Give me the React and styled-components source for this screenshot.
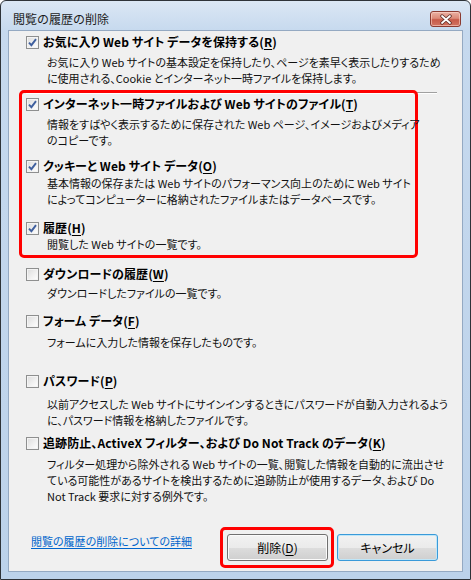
import styled, { createGlobalStyle } from "styled-components";

const GlobalStyle = createGlobalStyle`
  html, body {
    margin: 0;
    padding: 0;
    background: #ffffff;
  }
  body {
    font-family: "Noto Sans CJK JP", "Noto Sans", sans-serif;
    font-feature-settings: "palt";
    font-size: 12px;
    color: #000;
  }
`;

const Window = styled.div`
  box-sizing: border-box;
  width: 471px;
  height: 580px;
  display: flex;
  flex-direction: column;
  border: 1px solid #2e3338;
  border-radius: 6px 6px 0 0;
  padding: 0 7px 7px;
  background: linear-gradient(#dbe7f4 0px, #c6d9ee 30px, #bcd2ea 100%);
`;

const TitleBar = styled.div`
  height: 29px;
  display: flex;
  align-items: flex-start;
  justify-content: space-between;
`;

const Title = styled.div`
  margin: 10px 0 0 5px;
  line-height: 16px;
  font-size: 12px;
  color: #1b1b1b;
  font-feature-settings: normal;
`;

const CloseButton = styled.div`
  box-sizing: border-box;
  width: 31px;
  height: 16px;
  margin: 10px 2px 0 0;
  border: 1px solid #8b3b31;
  border-radius: 3px;
  background: linear-gradient(#eab1a3 0%, #dc8a78 45%, #c75a48 55%, #d27462 100%);
  box-shadow: inset 0 0 0 1px rgba(255, 220, 210, 0.55);
  display: flex;
  align-items: center;
  justify-content: center;
`;

const Client = styled.div`
  flex: 1;
  display: flex;
  flex-direction: column;
  background: #f0f0f0;
  border: 1px solid #94a9c2;
`;

const List = styled.div`
  display: flex;
  flex-direction: column;
  padding-left: 17px;
`;

const Highlight = styled.div`
  position: relative;
  box-sizing: border-box;
  border: 3px solid #ff0000;
  border-radius: 5px;
`;

const GroupMark = styled(Highlight)`
  width: 399px;
  margin: -3px 0 0 -7px;
  padding: 0 0 3px 4px;
`;

const Separator = styled.div`
  width: 411px;
  height: 1px;
  margin-top: 6px;
  background: #a0a0a0;
  box-shadow: 0 1px 0 #ffffff;
`;

const Option = styled.div`
  display: flex;
  flex-direction: column;
  margin-top: ${(p) => p.$top}px;
`;

const LabelRow = styled.label`
  display: flex;
  align-items: center;
  height: 16px;
  gap: 4px;
`;

const LabelText = styled.span`
  font-weight: 700;
  line-height: 16px;
  white-space: nowrap;
  letter-spacing: 0.1px;
`;

const Desc = styled.div`
  margin: ${(p) => p.$gap}px 0 0 21px;
  font-size: 11px;
  line-height: 16px;
  white-space: nowrap;
  color: #111;
`;

const Key = styled.span`
  text-decoration: underline;
  text-underline-offset: 2px;
`;

const Box = styled.span`
  box-sizing: border-box;
  width: 13px;
  height: 13px;
  flex: none;
  border: 1px solid #8e8f8f;
  background: linear-gradient(135deg, #dcdcdc 0%, #f2f2f2 60%, #ffffff 100%);
  box-shadow: inset 0 0 0 1px #f4f4f4;
  display: flex;
  align-items: center;
  justify-content: center;
`;

const Footer = styled.div`
  display: flex;
  align-items: flex-start;
  margin-top: 23px;
  padding: 0 24px 0 22px;
`;

const HelpLink = styled.a`
  margin-top: 6px;
  font-size: 11px;
  line-height: 16px;
  color: #0066cc;
  text-decoration: underline;
  text-underline-offset: 2px;
  cursor: pointer;
`;

const ButtonMark = styled(Highlight)`
  margin-left: auto;
  padding: 4px 3px 4px 4px;
`;

const Button = styled.button`
  box-sizing: border-box;
  width: 101px;
  height: 27px;
  margin-top: ${(p) => (p.$default ? 7 : 0)}px;
  margin-left: ${(p) => (p.$default ? 3 : 0)}px;
  border: 1px solid ${(p) => (p.$default ? "#3a9ad9" : "#707070")};
  border-radius: 3px;
  background: linear-gradient(#f2f2f2 0%, #ebebeb 50%, #dddddd 51%, #cfcfcf 100%);
  box-shadow: inset 0 0 0 1px ${(p) => (p.$default ? "#bfe6f8" : "#fbfbfb")};
  font-family: inherit;
  font-feature-settings: "palt";
  font-size: 12px;
  color: #000;
  padding: 0;
`;

function CheckBox({ checked }) {
  return (
    <Box>
      {checked && (
        <svg width="9" height="9" viewBox="0 0 9 9">
          <path d="M1 4.6 L3.4 7.2 L8 1.2" fill="none" stroke="#3f5f9e" strokeWidth="1.9" />
        </svg>
      )}
    </Box>
  );
}

function Item({ label, keyChar, lines, checked, top, gap }) {
  return (
    <Option $top={top}>
      <LabelRow>
        <CheckBox checked={checked} />
        <LabelText>
          {label}(<Key>{keyChar}</Key>)
        </LabelText>
      </LabelRow>
      <Desc $gap={gap}>
        {lines.map((line, i) => (
          <div key={i}>{line}</div>
        ))}
      </Desc>
    </Option>
  );
}

const keep = {
  label: "お気に入り Web サイト データを保持する",
  keyChar: "R",
  checked: true,
  top: 3,
  gap: 4,
  lines: [
    "お気に入り Web サイトの基本設定を保持したり、ページを素早く表示したりするため",
    "に使用される、Cookie とインターネット一時ファイルを保持します。",
  ],
};

const marked = [
  {
    label: "インターネット一時ファイルおよび Web サイトのファイル",
    keyChar: "T",
    checked: true,
    top: 3,
    gap: 4,
    lines: [
      "情報をすばやく表示するために保存された Web ページ、イメージおよびメディア",
      "のコピーです。",
    ],
  },
  {
    label: "クッキーと Web サイト データ",
    keyChar: "O",
    checked: true,
    top: 10,
    gap: 1,
    lines: [
      "基本情報の保存または Web サイトのパフォーマンス向上のために Web サイト",
      "によってコンピューターに格納されたファイルまたはデータベースです。",
    ],
  },
  {
    label: "履歴",
    keyChar: "H",
    checked: true,
    top: 13,
    gap: 0,
    lines: ["閲覧した Web サイトの一覧です。"],
  },
];

const rest = [
  {
    label: "ダウンロードの履歴",
    keyChar: "W",
    top: 8,
    gap: 3,
    lines: ["ダウンロードしたファイルの一覧です。"],
  },
  {
    label: "フォーム データ",
    keyChar: "F",
    top: 12,
    gap: 5,
    lines: ["フォームに入力した情報を保存したものです。"],
  },
  {
    label: "パスワード",
    keyChar: "P",
    top: 23,
    gap: 7,
    lines: [
      "以前アクセスした Web サイトにサインインするときにパスワードが自動入力されるよう",
      "に、パスワード情報を格納したファイルです。",
    ],
  },
  {
    label: "追跡防止、ActiveX フィルター、および Do Not Track のデータ",
    keyChar: "K",
    top: 7,
    gap: 5,
    lines: [
      "フィルター処理から除外される Web サイトの一覧、閲覧した情報を自動的に流出させ",
      "ている可能性があるサイトを検出するために追跡防止が使用するデータ、および Do",
      "Not Track 要求に対する例外です。",
    ],
  },
];

export default function App() {
  return (
    <>
      <GlobalStyle />
      <Window>
        <TitleBar>
          <Title>閲覧の履歴の削除</Title>
          <CloseButton>
            <svg width="14" height="11" viewBox="0 0 14 11">
              <path d="M3 2 L11 9 M11 2 L3 9" stroke="#5a2a24" strokeWidth="3.4" strokeLinecap="round" />
              <path d="M3 2 L11 9 M11 2 L3 9" stroke="#ffffff" strokeWidth="1.8" strokeLinecap="round" />
            </svg>
          </CloseButton>
        </TitleBar>
        <Client>
          <List>
            <Item {...keep} />
            <Separator />
            <GroupMark>
              {marked.map((it) => (
                <Item key={it.keyChar} {...it} />
              ))}
            </GroupMark>
            {rest.map((it) => (
              <Item key={it.keyChar} {...it} />
            ))}
          </List>
          <Footer>
            <HelpLink>閲覧の履歴の削除についての詳細</HelpLink>
            <ButtonMark>
              <Button>
                削除(<Key>D</Key>)
              </Button>
            </ButtonMark>
            <Button $default>キャンセル</Button>
          </Footer>
        </Client>
      </Window>
    </>
  );
}
